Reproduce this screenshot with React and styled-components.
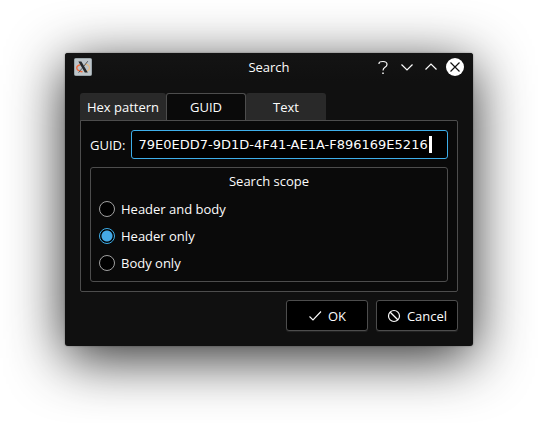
import React, { useState } from "react";
import styled, { createGlobalStyle, css } from "styled-components";

const Global = createGlobalStyle`
  *, *::before, *::after { box-sizing: border-box; }
  body { margin: 0; background: #fff; }
  body, button, input { font-family: "Open Sans", "Noto Sans", sans-serif; font-size: 13px; line-height: 18px; color: #fcfcfc; }
`;

const Desktop = styled.main`
  padding: 53px 65px 77px;
`;

const Dialog = styled.form`
  display: flex;
  flex-direction: column;
  background: #101010;
  border-radius: 3px;
  box-shadow: 0 12px 56px rgba(0, 0, 0, 0.84), 0 0 2px rgba(0, 0, 0, 0.4);
`;

const TitleBar = styled.header`
  display: grid;
  grid-template-columns: 1fr auto 1fr;
  align-items: center;
  height: 28px;
  padding: 0 9px;
  background: linear-gradient(#141414, #101010);
  border-radius: 3px 3px 0 0;
`;

const Title = styled.h1`
  margin: 0;
  font-size: 13px;
  font-weight: 400;
`;

const WindowButtons = styled.div`
  display: flex;
  justify-content: flex-end;
  gap: 6px;
`;

const WindowButton = styled.button`
  display: flex;
  width: 18px;
  height: 18px;
  padding: 0;
  border: 0;
  border-radius: 50%;
  color: ${(p) => (p.$filled ? "#101010" : "#fcfcfc")};
  background: ${(p) => (p.$filled ? "#fff" : "transparent")};
`;

const Glyph = styled.svg`
  display: block;
  flex: none;
  fill: none;
  stroke: currentColor;
`;

const Content = styled.div`
  display: flex;
  flex-direction: column;
  padding: 12px 15px 15px;
`;

const TabList = styled.div`
  display: flex;
  margin-bottom: -1px;
`;

const Tab = styled.button`
  width: 80px;
  height: 28px;
  padding: 0;
  border: 1px solid transparent;
  border-top-color: #2a2a2a;
  border-bottom-color: #4d4d4d;
  border-radius: 3px 3px 0 0;
  background: #292929;
  ${(p) => p.$wide && css`width: 86px;`}
  ${(p) =>
    p.$active &&
    css`
      border-color: #4d4d4d;
      border-bottom-color: #0a0a0a;
      background: #0a0a0a;
    `}
`;

const Panel = styled.section`
  display: flex;
  flex-direction: column;
  gap: 8px;
  padding: 9px;
  border: 1px solid #4d4d4d;
  border-radius: 0 2px 2px 2px;
  background: #0a0a0a;
`;

const FieldRow = styled.div`
  display: flex;
  align-items: center;
  gap: 6px;
`;

const FieldLabel = styled.label`
  flex: none;
`;

const TextField = styled.div`
  display: flex;
  flex: 1;
  align-items: center;
  min-width: 0;
  height: 29px;
  padding: 0 6px;
  gap: 1px;
  border: 1px solid #3daee9;
  border-radius: 3px;
  background: #000;
`;

const TextInput = styled.input`
  field-sizing: content;
  min-width: 0;
  padding: 0;
  border: 0;
  outline: 0;
  background: none;
  font-family: "DejaVu Sans", sans-serif;
`;

const Caret = styled.span`
  flex: none;
  width: 3px;
  height: 17px;
  background: #fff;
`;

const ScopeGroup = styled.div`
  display: flex;
  flex-direction: column;
  gap: 9px;
  padding: 4px 8px 9px;
  border: 1px solid #4d4d4d;
  border-radius: 3px;
`;

const ScopeTitle = styled.h2`
  margin: 0 0 1px;
  font-size: 13px;
  font-weight: 400;
  text-align: center;
`;

const RadioLabel = styled.label`
  display: flex;
  align-items: center;
  align-self: flex-start;
  gap: 6px;
`;

const Radio = styled.input`
  appearance: none;
  width: 16px;
  height: 16px;
  margin: 0;
  border: 1px solid #a0a0a0;
  border-radius: 50%;
  background: #000;
  &:checked {
    border-color: #3daee9;
    background: radial-gradient(circle closest-side, #45a9e6 5px, #000 6px);
  }
`;

const Actions = styled.footer`
  display: flex;
  justify-content: flex-end;
  gap: 8px;
  margin-top: 8px;
`;

const ActionButton = styled.button`
  display: flex;
  align-items: center;
  justify-content: center;
  gap: 6px;
  width: 82px;
  height: 31px;
  padding: 0;
  border: 1px solid #4d4d4d;
  border-radius: 3px;
  background: #000;
  box-shadow: 0 1px 1px #242424;
`;

const AppLogo = () => (
  <Glyph width="18" height="18" viewBox="0 0 18 18" aria-hidden="true">
    <rect x="0.5" y="0.5" width="17" height="17" rx="1" fill="#bdc5c9" stroke="#9aa4a9" />
    <path d="M11 6.2C17 7.2 17 12.6 10.5 13.6" stroke="#e7ba82" strokeWidth="1.2" />
    <path d="M6.5 6.8C1 8 1.5 13 8.5 13.8" stroke="#f06b3d" strokeWidth="1.4" />
    <path d="M13.8 3.2L10 8M8.2 10.2L4.6 14.6" stroke="#55595b" strokeWidth="1" />
    <path d="M4.4 3.4H7.4L13.8 14.4H10.8Z" fill="#25292b" stroke="none" />
  </Glyph>
);

const windowGlyphs = [
  { name: "Help", body: <><path d="M5 6V5.5Q5 3.5 9 3.5Q13 3.5 13 6.5Q13 8 11 9.2Q9 10.4 9 12.5" /><path d="M9 14.5V16" strokeWidth="1.5" /></> },
  { name: "Minimize", body: <path d="M3.5 6.5L9 12L14.5 6.5" /> },
  { name: "Maximize", body: <path d="M3.5 11.5L9 6L14.5 11.5" /> },
  { name: "Close", filled: true, body: <path d="M4.5 4.5L13.5 13.5M13.5 4.5L4.5 13.5" /> },
];

const tabs = ["Hex pattern", "GUID", "Text"];
const scopes = ["Header and body", "Header only", "Body only"];

export default function App() {
  const [tab, setTab] = useState("GUID");
  const [scope, setScope] = useState("Header only");
  const [guid, setGuid] = useState("79E0EDD7-9D1D-4F41-AE1A-F896169E5216");

  return (
    <Desktop>
      <Global />
      <Dialog onSubmit={(e) => e.preventDefault()}>
        <TitleBar>
          <AppLogo />
          <Title>Search</Title>
          <WindowButtons>
            {windowGlyphs.map((g) => (
              <WindowButton key={g.name} type="button" aria-label={g.name} $filled={g.filled}>
                <Glyph width="18" height="18" viewBox="0 0 18 18" strokeWidth="1.2">{g.body}</Glyph>
              </WindowButton>
            ))}
          </WindowButtons>
        </TitleBar>
        <Content>
          <TabList role="tablist">
            {tabs.map((t, i) => (
              <Tab
                key={t}
                type="button"
                role="tab"
                aria-selected={t === tab}
                $active={t === tab}
                $wide={i === 0}
                onClick={() => setTab(t)}
              >
                {t}
              </Tab>
            ))}
          </TabList>
          <Panel role="tabpanel">
            <FieldRow>
              <FieldLabel htmlFor="guid">GUID:</FieldLabel>
              <TextField>
                <TextInput id="guid" value={guid} onChange={(e) => setGuid(e.target.value)} />
                <Caret />
              </TextField>
            </FieldRow>
            <ScopeGroup role="radiogroup" aria-labelledby="scope-title">
              <ScopeTitle id="scope-title">Search scope</ScopeTitle>
              {scopes.map((s) => (
                <RadioLabel key={s}>
                  <Radio type="radio" name="scope" checked={scope === s} onChange={() => setScope(s)} />
                  {s}
                </RadioLabel>
              ))}
            </ScopeGroup>
          </Panel>
          <Actions>
            <ActionButton type="submit">
              <Glyph width="14" height="14" viewBox="0 0 14 14" strokeWidth="1.1" aria-hidden="true">
                <path d="M1.5 7.5L5 11L13 2.5" />
              </Glyph>
              OK
            </ActionButton>
            <ActionButton type="button">
              <Glyph width="14" height="14" viewBox="0 0 14 14" strokeWidth="1.2" aria-hidden="true">
                <circle cx="7" cy="7" r="5.5" />
                <path d="M3 3L11 11" />
              </Glyph>
              Cancel
            </ActionButton>
          </Actions>
        </Content>
      </Dialog>
    </Desktop>
  );
}
